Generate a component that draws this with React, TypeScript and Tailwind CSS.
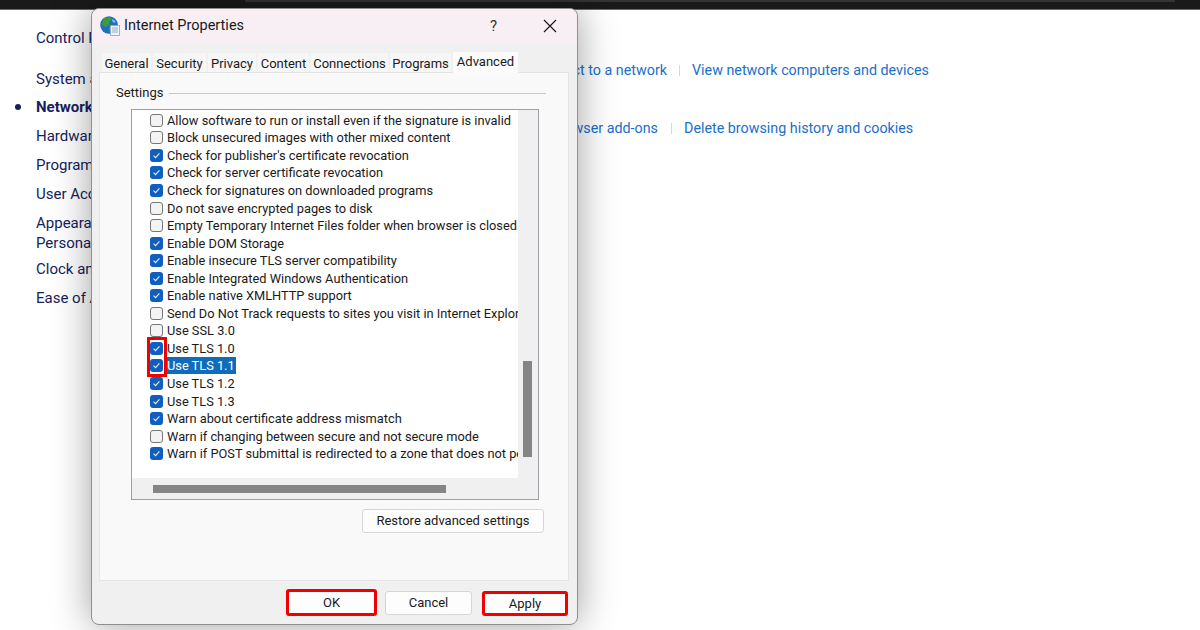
import React from "react";

const rows = [
  { label: "Allow software to run or install even if the signature is invalid", checked: false },
  { label: "Block unsecured images with other mixed content", checked: false },
  { label: "Check for publisher's certificate revocation", checked: true },
  { label: "Check for server certificate revocation", checked: true },
  { label: "Check for signatures on downloaded programs", checked: true },
  { label: "Do not save encrypted pages to disk", checked: false },
  { label: "Empty Temporary Internet Files folder when browser is closed", checked: false },
  { label: "Enable DOM Storage", checked: true },
  { label: "Enable insecure TLS server compatibility", checked: true },
  { label: "Enable Integrated Windows Authentication", checked: true },
  { label: "Enable native XMLHTTP support", checked: true },
  { label: "Send Do Not Track requests to sites you visit in Internet Explorer", checked: false },
  { label: "Use SSL 3.0", checked: false },
  { label: "Use TLS 1.0", checked: true },
  { label: "Use TLS 1.1", checked: true, selected: true },
  { label: "Use TLS 1.2", checked: true },
  { label: "Use TLS 1.3", checked: true },
  { label: "Warn about certificate address mismatch", checked: true },
  { label: "Warn if changing between secure and not secure mode", checked: false },
  { label: "Warn if POST submittal is redirected to a zone that does not permit posting", checked: true },
];

const tabs = [
  { label: "General", width: "w-[49px]" },
  { label: "Security", width: "w-[53px]" },
  { label: "Privacy", width: "w-[48px]" },
  { label: "Content", width: "w-[51px]" },
  { label: "Connections", width: "w-[77px]" },
  { label: "Programs", width: "w-[61px]" },
];

const navItems = [
  "System and Security",
  "Network and Internet",
  "Hardware and Sound",
  "Programs",
  "User Accounts",
];

const Checkbox = ({ checked }: { checked: boolean }) =>
  checked ? (
    <span className="flex h-[13px] w-[13px] shrink-0 items-center justify-center rounded-[3px] bg-[#0f5fc0]">
      <svg width="9" height="9" viewBox="0 0 9 9" fill="none">
        <path d="M1.5 4.6 L3.6 6.6 L7.4 2.4" stroke="#e4eefa" strokeWidth="1.1" />
      </svg>
    </span>
  ) : (
    <span className="h-[13px] w-[13px] shrink-0 rounded-[3px] border border-[#777777] bg-[#f3f3f3]" />
  );

const DialogButton = ({ label, size, outlined }: { label: string; size: string; outlined?: boolean }) => (
  <button
    className={`flex items-center justify-center rounded-[3px] bg-[#fdfdfd] text-[13px] text-[#1a1a1a] ${size} ${
      outlined ? "border-[3px] border-[#f00000]" : "border border-[#d6d6d6]"
    }`}
  >
    {label}
  </button>
);

const GlobeIcon = () => (
  <svg width="20" height="20" viewBox="0 0 20 20">
    <circle cx="9" cy="9" r="8.8" fill="#1f6fc0" />
    <path d="M4 2.5 L9 .8 L12 3 L9 6 L9 9 L5 11 L1.5 8 Z" fill="#3f9a3a" />
    <path d="M9 11 L13 10 L14 14 L10 17 Z" fill="#4fa544" />
    <path d="M12 3 L15 4.5 L15.5 7 L12.5 6 Z" fill="#7fb8e6" />
    <rect x="10.5" y="9.5" width="9" height="10" fill="#eef3f8" stroke="#8aa4bc" strokeWidth="0.8" />
    <path d="M12 12 H18 M12 14 H18 M12 16 H18" stroke="#7f9db8" strokeWidth="0.8" />
  </svg>
);

export default function App() {
  return (
    <div className="relative h-[630px] w-[1200px] overflow-hidden bg-white font-['Roboto',sans-serif]">
      <div className="h-[10px] border-b border-[#6a6a6a] bg-[#1a1a1a]">
        <div className="ml-[245px] h-[2px] w-[930px] bg-[#333333]" />
      </div>

      {/* control panel behind the dialog */}
      <div className="flex pt-[18px]">
        <div className="w-[92px] shrink-0 overflow-hidden whitespace-nowrap pl-[36px] text-[15px] leading-[20px] text-[#16215c]">
          <div>Control Panel Home</div>
          <div className="mt-[21px] flex flex-col gap-[9px]">
            {navItems.map((item, i) => (
              <div key={item} className={`relative ${i === 0 ? "-mb-px" : ""} ${i === 1 ? "font-bold" : ""}`}>
                {i === 1 && (
                  <span className="absolute left-[-21px] top-[7px] h-[6px] w-[6px] rounded-full bg-[#16215c]" />
                )}
                {item}
              </div>
            ))}
            <div>
              Appearance and
              <br />
              Personalization
            </div>
            <div className="-mt-[3px]">Clock and Region</div>
            <div>Ease of Access</div>
          </div>
        </div>
        <div className="flex w-[1000px] flex-col gap-[38px] whitespace-nowrap pt-[32px] text-[14.3px] leading-[20px] text-[#1a6fcb]">
          <div className="flex items-center">
            <div className="flex w-[575px] justify-end">Connect to a network</div>
            <span className="ml-[12px] mr-[12px] h-[11px] w-px bg-[#d4d9de]" />
            <div>View network computers and devices</div>
          </div>
          <div className="flex items-center">
            <div className="flex w-[566px] justify-end">Manage browser add-ons</div>
            <span className="ml-[13px] mr-[12px] h-[11px] w-px bg-[#d4d9de]" />
            <div>Delete browsing history and cookies</div>
          </div>
        </div>
      </div>

      {/* Internet Properties dialog */}
      <div className="absolute left-[91px] top-[8px] flex h-[617px] w-[487px] flex-col rounded-[8px] border border-[#8f8f8f] bg-[#f0f0f0] shadow-[0_0_38px_rgba(0,0,0,0.38)]">
        <div className="flex h-[34px] shrink-0 items-center rounded-t-[8px] bg-[#f8eff4] pl-[8px]">
          <GlobeIcon />
          <span className="ml-[4px] text-[14.5px] text-[#1a1a1a]">Internet Properties</span>
          <span className="ml-auto text-[15px] text-[#333333]">?</span>
          <svg className="ml-[46px] mr-[20px]" width="14" height="14" viewBox="0 0 14 14" fill="none">
            <path d="M1 1 L13 13 M13 1 L1 13" stroke="#1a1a1a" strokeWidth="1.2" />
          </svg>
        </div>

        <div className="mt-[10px] flex h-[19px] items-start gap-[2px] pl-[10px] text-[13px] leading-[19px] text-[#1a1a1a]">
          {tabs.map((tab) => (
            <div
              key={tab.label}
              className={`flex h-[19px] items-center justify-center bg-[#f6f6f6] pt-[2px] ${tab.width}`}
            >
              {tab.label}
            </div>
          ))}
          <div className="relative z-10 -mt-px flex h-[21px] w-[65px] items-center justify-center bg-[#fbfbfb] pb-[2px]">
            Advanced
          </div>
        </div>

        <div className="ml-[7px] flex h-[509px] w-[470px] flex-col border border-[#e4e4e4] bg-[#f9f9f9] pl-[31px] pr-[29px] pt-[10px]">
          <div className="flex items-center text-[13px] leading-[20px] text-[#1a1a1a]">
            <span className="-ml-[15px]">Settings</span>
            <span className="-mr-[7px] ml-[6px] h-px flex-1 bg-[#c8c8c8]" />
          </div>

          <div className="mt-[6px] flex h-[391px] w-[408px] flex-col border border-[#9aa0a6] bg-[#f0f0f0]">
            <div className="flex min-h-0 flex-1">
              <div className="h-[368px] w-[386px] overflow-hidden bg-white pl-[18px] pt-[1.5px]">
                {rows.map((row) => (
                  <div key={row.label} className="flex h-[17.55px] items-center whitespace-nowrap text-[12.8px]">
                    <Checkbox checked={row.checked} />
                    <span
                      className={`ml-[3px] px-px leading-[17px] ${
                        row.selected ? "bg-[#0f6cbd] text-white" : "text-[#1a1a1a]"
                      }`}
                    >
                      {row.label}
                    </span>
                  </div>
                ))}
              </div>
              <div className="ml-[5px] mt-[251px] h-[96px] w-[9px] bg-[#858585]" />
            </div>
            <div className="mb-[6px] ml-[21px] h-[8px] w-[293px] bg-[#858585]" />
          </div>

          <div className="mt-[9px] flex justify-end">
            <div className="-mr-[5px]">
              <DialogButton label="Restore advanced settings" size="h-[24px] w-[182px]" />
            </div>
          </div>
        </div>

        <div className="mt-[8px] flex items-start justify-end pr-[9px]">
          <DialogButton label="OK" size="h-[27px] w-[91px]" outlined />
          <div className="ml-[8px] mt-[2px]">
            <DialogButton label="Cancel" size="h-[24px] w-[87px]" />
          </div>
          <div className="ml-[10px] mt-[2px]">
            <DialogButton label="Apply" size="h-[25px] w-[86px]" outlined />
          </div>
        </div>
      </div>

      {/* red highlight round the TLS checkboxes */}
      <div className="absolute left-[147px] top-[337px] h-[40px] w-[20px] border-[3px] border-[#f00000]" />
    </div>
  );
}
